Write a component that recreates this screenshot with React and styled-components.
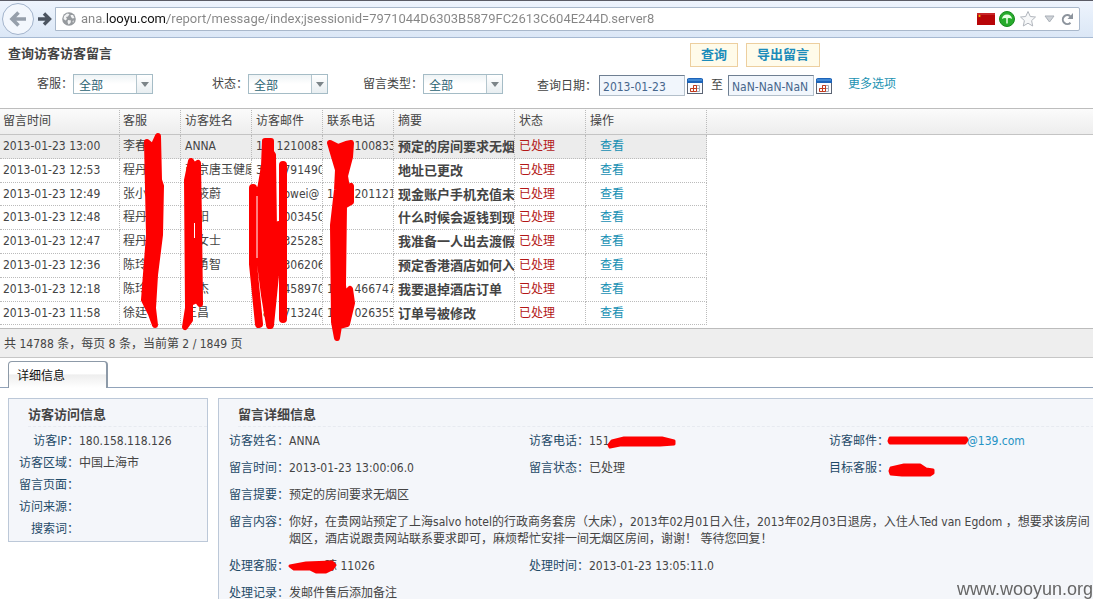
import React from "react";
import styled, { createGlobalStyle, css } from "styled-components";

const Global = createGlobalStyle`
  *, *::before, *::after { box-sizing: border-box; }
  body {
    margin: 0;
    overflow: hidden;
    background: #fff;
    color: #444;
    font: 12px/17px "DejaVu Sans Condensed", "Noto Sans", "Noto Sans CJK SC", sans-serif;
  }
  button, input, select { font: inherit; }
  h1, h2, dl, dd, p { margin: 0; }
`;

const Page = styled.div`
  position: relative;
  display: flex;
  flex-direction: column;
  min-height: 100vh;
`;

/* browser chrome */

const Chrome = styled.header`
  display: flex;
  align-items: center;
  height: 38px;
  padding: 0 13px 0 2px;
  border-top: 1px solid #5b5c66;
  border-bottom: 1px solid #a6b9d2;
  background: linear-gradient(#eef4fd, #dbe7f6);
`;

const NavButton = styled.button`
  display: flex;
  align-items: center;
  justify-content: center;
  flex: none;
  width: ${(p) => (p.$round ? 32 : 21)}px;
  height: ${(p) => (p.$round ? 32 : 23)}px;
  padding: 0;
  border: ${(p) => (p.$round ? "1px solid #a3b4cc" : "0")};
  border-radius: ${(p) => (p.$round ? "50%" : "0")};
  background: ${(p) => (p.$round ? "#f3f7fd" : "transparent")};
`;

const AddressBar = styled.div`
  display: flex;
  align-items: center;
  flex: 1;
  height: 24px;
  padding: 0 5px 0 6px;
  border: 1px solid #a9b8cb;
  border-radius: 0 2px 2px 0;
  background: #fff;
  gap: 5px;
`;

const AddressInput = styled.input`
  flex: 1;
  min-width: 0;
  height: 20px;
  padding: 0;
  border: 0;
  outline: 0;
  color: #808080;
  font: 13px/20px Roboto, sans-serif;
  background: linear-gradient(90deg, #858585 26px, #111 26px, #111 86px, #858585 86px);
  background-clip: text;
  -webkit-text-fill-color: transparent;
`;

const AddressIcons = styled.div`
  display: flex;
  align-items: center;
  gap: 4px;
`;

/* search form */

const Heading = styled.div`
  display: flex;
  gap: 8px;
  padding: 5px 8px 0;
`;

const Title = styled.h1`
  flex: 0 1 674px;
  font-size: 13px;
  line-height: 22px;
  font-weight: 700;
`;

const ActionButton = styled.button`
  height: 24px;
  padding: 0 10px;
  border: 1px solid #edcf9f;
  background: #fffbea;
  color: #1b8cba;
  font-size: 13px;
  font-weight: 700;
  line-height: 22px;
`;

const Filters = styled.form`
  display: flex;
  align-items: flex-start;
  padding: 7px 8px 12px 0;
`;

const Field = styled.div`
  display: flex;
  justify-content: flex-end;
  flex: none;
  width: ${(p) => p.$width}px;
`;

const FieldLabel = styled.label`
  line-height: 20px;
  white-space: nowrap;
`;

const SelectBox = styled.div`
  position: relative;
  width: 80px;
  height: 20px;
  border: 1px solid #a5bcc6;
  background: linear-gradient(#eef3f5, #fff 50%);
`;

const Select = styled.select`
  width: 100%;
  height: 20px;
  padding: 3px 0 0 5px;
  border: 0;
  outline: 0;
  appearance: none;
  background: transparent;
  color: #2c6373;
  line-height: 17px;
`;

const SelectArrow = styled.span`
  position: absolute;
  top: 0;
  right: 0;
  display: flex;
  align-items: center;
  justify-content: center;
  width: 16px;
  height: 18px;
  border-left: 1px solid #b4c6ce;
  background: linear-gradient(#fff, #e8eef1);
  pointer-events: none;
`;

const DateGroup = styled.div`
  display: flex;
  align-items: center;
  padding: 1px 0 0 34px;
  gap: 2px;
`;

const DateInput = styled.input`
  width: 86px;
  height: 21px;
  padding: 2px 0 0 3px;
  border: 1px solid #b3bfca;
  border-top-color: #6f7f92;
  border-left-color: #6f7f92;
  outline: 0;
  background: #f1f6fc;
  color: #47668c;
`;

const IconButton = styled.button`
  display: flex;
  padding: 0;
  border: 0;
  background: none;
`;

const To = styled.label`
  padding: 0 3px 0 6px;
`;

const MoreLink = styled.a`
  padding: 2px 0 0 16px;
  color: #1c93b2;
  text-decoration: none;
`;

/* message list */

const ListArea = styled.section`
  position: relative;
  padding-bottom: 3px;
`;

const Grid = styled.table`
  width: 100%;
  table-layout: fixed;
  border-collapse: separate;
  border-spacing: 0;
`;

const Col = styled.col`
  width: ${(p) => p.$width}px;
`;

const cell = css`
  padding: 0 0 0 3px;
  overflow: hidden;
  white-space: nowrap;
  text-align: left;
  &:nth-child(n + 3) { padding-left: 4px; }
`;

const Th = styled.th`
  ${cell}
  height: 27px;
  border-top: 1px solid #bdbdbd;
  border-bottom: 1px solid #c4c4c4;
  background: linear-gradient(#fbfbfb, #ededed);
  font-weight: 400;
  &:not(:last-child) { border-right: 1px dotted #bbb; }
`;

const Td = styled.td`
  ${cell}
  border-right: 1px dotted #bbb;
  border-bottom: 1px dotted #bbb;
  background: ${(p) => (p.$active ? "#ececec" : "#fff")};
  color: ${(p) => (p.$status ? "#b31717" : "inherit")};
  font-size: ${(p) => (p.$strong ? 13 : 12)}px;
  font-weight: ${(p) => (p.$strong ? 700 : 400)};
`;

const Tr = styled.tr`
  height: 24px;
  &:nth-child(5n + 3) { height: 23px; }
`;

const ViewLink = styled.a`
  padding-left: 10px;
  color: #158fb3;
  text-decoration: none;
`;

const ListMarks = styled.svg`
  position: absolute;
  top: 0;
  left: 0;
  pointer-events: none;
  z-index: 1;
`;

const Pager = styled.p`
  height: 30px;
  padding: 0 4px;
  border-top: 1px solid #bcbcbc;
  border-bottom: 1px solid #c6c6c6;
  background: #eee;
  line-height: 30px;
`;

/* details */

const Tabs = styled.div`
  display: flex;
  margin-top: 3px;
  padding-left: 8px;
  border-bottom: 1px solid #91a3ba;
`;

const Tab = styled.button`
  width: 100px;
  height: 27px;
  margin-bottom: -1px;
  padding: 2px 0 0 8px;
  border: 1px solid #8d9aa8;
  border-right-width: 2px;
  border-bottom: 0;
  border-radius: 4px 4px 0 0;
  background: linear-gradient(#fff 45%, #eee 50%, #fff);
  color: #111;
  text-align: left;
`;

const Details = styled.div`
  display: flex;
  align-items: flex-start;
  flex: 1;
  gap: 10px;
  padding: 10px 0 0 8px;
  overflow: hidden;
`;

const Panel = styled.section`
  flex: ${(p) => (p.$wide ? "1 0 auto" : "0 0 200px")};
  align-self: ${(p) => (p.$wide ? "stretch" : "flex-start")};
  padding-bottom: 1px;
  border: 1px solid #bcc8d8;
  background: #f4f6fa;
`;

const PanelTitle = styled.h2`
  height: 28px;
  margin-left: 19px;
  border-bottom: 1px dashed #e7eaf0;
  font-size: 13px;
  font-weight: 700;
  line-height: 31px;
`;

const InfoList = styled.dl`
  padding: 3px 0 0 10px;
`;

const InfoRow = styled.div`
  display: flex;
  padding: ${(p) => (p.$loose ? "3px 0 7px" : "3px 0 2px")};
`;

const Info = styled.div`
  display: flex;
  flex: 0 0 ${(p) => (p.$full ? "auto" : "300px")};
`;

const InfoLabel = styled.dt`
  flex: none;
  width: 60px;
  color: #1f4a68;
  text-align: right;
  white-space: nowrap;
`;

const InfoValue = styled.dd`
  position: relative;
  white-space: nowrap;
`;

const MailLink = styled.a`
  padding-left: 78px;
  color: #2492c4;
  text-decoration: none;
`;

const InlineMark = styled.svg`
  position: absolute;
  top: 0;
  left: -3px;
  overflow: visible;
`;

const Watermark = styled.span`
  position: fixed;
  right: 0;
  bottom: 0;
  color: #666;
  font: 18px/20px "Liberation Sans", sans-serif;
`;

const H = "\u2007";
const W = "\u3000";

const columns = [
  ["留言时间", 120],
  ["客服", 61],
  ["访客姓名", 71],
  ["访客邮件", 71],
  ["联系电话", 71],
  ["摘要", 121],
  ["状态", 71],
  ["操作", 121],
];

const rows = [
  ["13:00", "李春", "ANNA", "1" + H + H + "1210083", H.repeat(4) + "100833", "预定的房间要求无烟"],
  ["12:53", "程丹", "南京唐玉健康", "3" + H.repeat(3) + "791490", "", "地址已更改"],
  ["12:49", "张小", W + "筱蔚", H.repeat(4) + "owei@", "1" + H.repeat(3) + "201121", "现金账户手机充值未"],
  ["12:48", "程丹", W + "阳", H.repeat(4) + "003450", "", "什么时候会返钱到现"],
  ["12:47", "程丹", W + "女士", H + H + "0" + H + "325283", "", "我准备一人出去渡假"],
  ["12:36", "陈玲", W + "勇智", H + H + "8" + H + "306206", "", "预定香港酒店如何入"],
  ["12:18", "陈玲", W + "杰", H.repeat(4) + "458970", "1" + H.repeat(3) + "466747", "我要退掉酒店订单"],
  ["11:58", "徐廷", "王昌", H + "8" + H + H + "713240", "1" + H.repeat(3) + "026355", "订单号被修改"],
];

function CalendarIcon() {
  return (
    <svg width="16" height="16" viewBox="0 0 16 16" aria-hidden="true">
      <rect x="0.5" y="1.5" width="15" height="14" fill="#fbfcff" stroke="#5b6473" />
      <path d="M0 2Q0 0 2 0H14Q16 0 16 2V5H0Z" fill="#1d63b8" />
      <path d="M1 2H15" stroke="#65aef0" />
      <path d="M6.5 7.5H12.5V13.5H3.5V10.5H12.5M6.5 7.5V13.5M9.5 7.5V13.5" fill="none" stroke="#a5adb8" />
      <path d="M6.5 7.5H9.5V13.5H3.5V10.5H9.5M6.5 7.5V13.5" fill="none" stroke="#c23a1c" />
    </svg>
  );
}

function GlobeIcon() {
  return (
    <svg width="14" height="14" viewBox="0 0 14 14" aria-hidden="true">
      <circle cx="7" cy="7" r="6.8" fill="#969a9e" />
      <path d="M2 4L5 1.5 7.5 2 6 4.5 4 5 5 7 3.5 8.5 1.5 7ZM8.5 3L11 3 12.5 6 10.5 6.5 9 5ZM6 8L9 8.5 8.5 11 6.5 12.5 5.5 10ZM10.5 9L12 8.5 11 11Z" fill="#f2f3f4" />
    </svg>
  );
}

function FilterSelect({ id, label, width }) {
  return (
    <Field $width={width}>
      <FieldLabel htmlFor={id}>{label}：</FieldLabel>
      <SelectBox>
        <Select id={id} defaultValue="all">
          <option value="all">全部</option>
        </Select>
        <SelectArrow>
          <svg width="8" height="5" viewBox="0 0 8 5" aria-hidden="true">
            <path d="M0 0H8L4 5Z" fill="#7c8589" />
          </svg>
        </SelectArrow>
      </SelectBox>
    </Field>
  );
}

function InfoItem({ label, full, children }) {
  return (
    <Info $full={full}>
      <InfoLabel>{label}：</InfoLabel>
      <InfoValue>{children}</InfoValue>
    </Info>
  );
}

function Mark({ d }) {
  return (
    <InlineMark width="92" height="16" aria-hidden="true">
      <path d={d} fill="#fe0000" stroke="#fe0000" strokeWidth="3" strokeLinejoin="round" />
    </InlineMark>
  );
}

export default function App() {
  return (
    <>
      <Global />
      <Page>
        <Chrome>
          <NavButton $round aria-label="后退">
            <svg width="18" height="18" viewBox="0 0 18 18" aria-hidden="true">
              <path d="M9.5 2.5L3 9L9.5 15.5M3.5 9H17" fill="none" stroke="#969fab" strokeWidth="3.6" />
            </svg>
          </NavButton>
          <NavButton aria-label="前进">
            <svg width="14" height="14" viewBox="0 0 14 14" aria-hidden="true">
              <path d="M6 1.5L11.500 7L6 12.500M0 7H10.500" fill="none" stroke="#4b5460" strokeWidth="3.4" />
            </svg>
          </NavButton>
          <AddressBar>
            <GlobeIcon />
            <AddressInput
              aria-label="地址"
              defaultValue="ana.looyu.com/report/message/index;jsessionid=7971044D6303B5879FC2613C604E244D.server8"
            />
            <AddressIcons>
              <svg width="18" height="12" viewBox="0 0 18 12" aria-hidden="true">
                <rect width="18" height="12" fill="#b80508" />
                <path d="M0 1H18" stroke="#d8484a" />
                <path d="M2.500 1.500L3 2.500H4L3.200 3.200 3.500 4.300 2.500 3.700 1.500 4.300 1.800 3.200 1 2.500H2Z" fill="#f5c400" />
              </svg>
              <svg width="16" height="16" viewBox="0 0 16 16" aria-hidden="true">
                <circle cx="8" cy="8" r="7.5" fill="#27ab2c" stroke="#188a1e" />
                <path d="M3 8Q3.5 3.5 8 3.5T13 8Q10.5 6.5 8 7.5Q5.5 6.5 3 8Z" fill="#e8ffe4" />
                <path d="M8 7V12.5" stroke="#e8ffe4" strokeWidth="1.5" />
              </svg>
              <svg width="18" height="18" viewBox="0 0 18 18" aria-hidden="true">
                <path d="M9 1.5L11.3 6.5 16.5 7 12.6 10.6 13.7 16 9 13.2 4.3 16 5.4 10.6 1.5 7 6.7 6.5Z" fill="#f7f8f9" stroke="#b1b6bd" />
              </svg>
              <svg width="16" height="8" viewBox="0 0 16 8" aria-hidden="true">
                <path d="M4 1H13L8.5 7Z" fill="#cfd3d8" stroke="#a9afb7" />
              </svg>
              <svg width="13" height="13" viewBox="0 0 13 13" aria-hidden="true">
                <path d="M9.5 9.8A4.5 4.5 0 1 1 9.3 3.2" fill="none" stroke="#8d949d" strokeWidth="2" />
                <path d="M12 0V6H6.5Z" fill="#8d949d" />
              </svg>
            </AddressIcons>
          </AddressBar>
        </Chrome>

        <Heading>
          <Title>查询访客访客留言</Title>
          <ActionButton>查询</ActionButton>
          <ActionButton>导出留言</ActionButton>
        </Heading>

        <Filters>
          <FilterSelect id="agent" label="客服" width={153} />
          <FilterSelect id="state" label="状态" width={175} />
          <FilterSelect id="kind" label="留言类型" width={175} />
          <DateGroup>
            <FieldLabel htmlFor="from">查询日期：</FieldLabel>
            <DateInput id="from" defaultValue="2013-01-23" />
            <IconButton type="button" aria-label="开始日期"><CalendarIcon /></IconButton>
            <To htmlFor="to">至</To>
            <DateInput id="to" defaultValue="NaN-NaN-NaN" />
            <IconButton type="button" aria-label="结束日期"><CalendarIcon /></IconButton>
          </DateGroup>
          <MoreLink href="#more">更多选项</MoreLink>
        </Filters>

        <ListArea>
          <Grid>
            <colgroup>
              {columns.map(([name, width]) => <Col key={name} $width={width} />)}
              <col />
            </colgroup>
            <thead>
              <tr>
                {columns.map(([name]) => <Th key={name}>{name}</Th>)}
                <Th />
              </tr>
            </thead>
            <tbody>
              {rows.map(([time, agent, name, mail, phone, summary], i) => (
                <Tr key={time}>
                  <Td $active={i === 0}>2013-01-23 {time}</Td>
                  <Td $active={i === 0}>{agent}</Td>
                  <Td $active={i === 0}>{name}</Td>
                  <Td $active={i === 0}>{mail}</Td>
                  <Td $active={i === 0}>{phone}</Td>
                  <Td $active={i === 0} $strong>{summary}</Td>
                  <Td $active={i === 0} $status>已处理</Td>
                  <Td $active={i === 0}><ViewLink href="#view">查看</ViewLink></Td>
                </Tr>
              ))}
            </tbody>
          </Grid>
          <ListMarks width="370" height="240" viewBox="0 108 370 240" aria-hidden="true">
            <g fill="#fe0000" stroke="#fe0000" strokeWidth="6" strokeLinejoin="round" strokeLinecap="round">
              <path d="M147 142L153 147 158 136 159 180 161 186 160 235 155 275 153 308 155 325 151 314 148 308 144 300 149 235Z" />
              <path d="M191 161L194 166 198 163 199 222 200 304 197 300 190 303 190 320 185 327 188 308 187 180Z" />
              <path d="M253 188V264L259 324M260 190V256L265 295 270 325 276 265 279 225M283 165V319" fill="none" strokeWidth="8" />
              <path d="M265 141H271V152L273 155 274 230 271 295 267 295 259 256 260 190 264 166Z" />
              <path d="M330 143L338 147 346 144 351 143 350 157 345 176 347 188 351 186 351 202 344 206 343 285 344 295 350 289 352 303 347 324 339 326 337 338 334 322 333 225 337 190 338 170Z" />
            </g>
            <path d="M194.5 223V238M257 196V258" stroke="#fff" />
          </ListMarks>
        </ListArea>

        <Pager>共 14788 条，每页 8 条，当前第 2 / 1849 页</Pager>

        <Tabs>
          <Tab>详细信息</Tab>
        </Tabs>

        <Details>
          <Panel>
            <PanelTitle>访客访问信息</PanelTitle>
            <InfoList>
              <InfoRow><InfoItem label="访客IP" full>180.158.118.126</InfoItem></InfoRow>
              <InfoRow><InfoItem label="访客区域" full>中国上海市</InfoItem></InfoRow>
              <InfoRow><InfoItem label="留言页面" full /></InfoRow>
              <InfoRow><InfoItem label="访问来源" full /></InfoRow>
              <InfoRow><InfoItem label="搜索词" full /></InfoRow>
            </InfoList>
          </Panel>

          <Panel $wide>
            <PanelTitle>留言详细信息</PanelTitle>
            <InfoList>
              <InfoRow $loose>
                <InfoItem label="访客姓名">ANNA</InfoItem>
                <InfoItem label="访客电话">
                  151
                  <Mark d="M23 12L26 8 38 5 76 5 88 8 88 11 74 12 34 12 24 14Z" />
                </InfoItem>
                <InfoItem label="访客邮件">
                  <MailLink href="#mail">@139.com</MailLink>
                  <Mark d="M4 5H80L81 7 79 10H4L3 8Z" />
                </InfoItem>
              </InfoRow>
              <InfoRow $loose>
                <InfoItem label="留言时间">2013-01-23 13:00:06.0</InfoItem>
                <InfoItem label="留言状态">已处理</InfoItem>
                <InfoItem label="目标客服">
                  <Mark d="M5 8L18 5 34 5 40 9 47 10 47 13 44 15 16 15 5 14 4 11Z" />
                </InfoItem>
              </InfoRow>
              <InfoRow $loose>
                <InfoItem label="留言提要">预定的房间要求无烟区</InfoItem>
              </InfoRow>
              <InfoRow $loose>
                <InfoItem label="留言内容" full>
                  你好，在贵网站预定了上海salvo hotel的行政商务套房（大床），2013年02月01日入住，2013年02月03日退房，入住人Ted van Egdom ，想要求该房间
                  <br />
                  烟区，酒店说跟贵网站联系要求即可，麻烦帮忙安排一间无烟区房间，谢谢！ 等待您回复！
                </InfoItem>
              </InfoRow>
              <InfoRow $loose>
                <InfoItem label="处理客服">
                  {W.repeat(3)}琼 11026
                  <Mark d="M4 8L20 5 46 4 49 7 46 11 40 14 30 14 24 11 8 11Z" />
                </InfoItem>
                <InfoItem label="处理时间">2013-01-23 13:05:11.0</InfoItem>
              </InfoRow>
              <InfoRow $loose>
                <InfoItem label="处理记录">发邮件售后添加备注</InfoItem>
              </InfoRow>
            </InfoList>
          </Panel>
        </Details>
        <Watermark>www.wooyun.org</Watermark>
      </Page>
    </>
  );
}
